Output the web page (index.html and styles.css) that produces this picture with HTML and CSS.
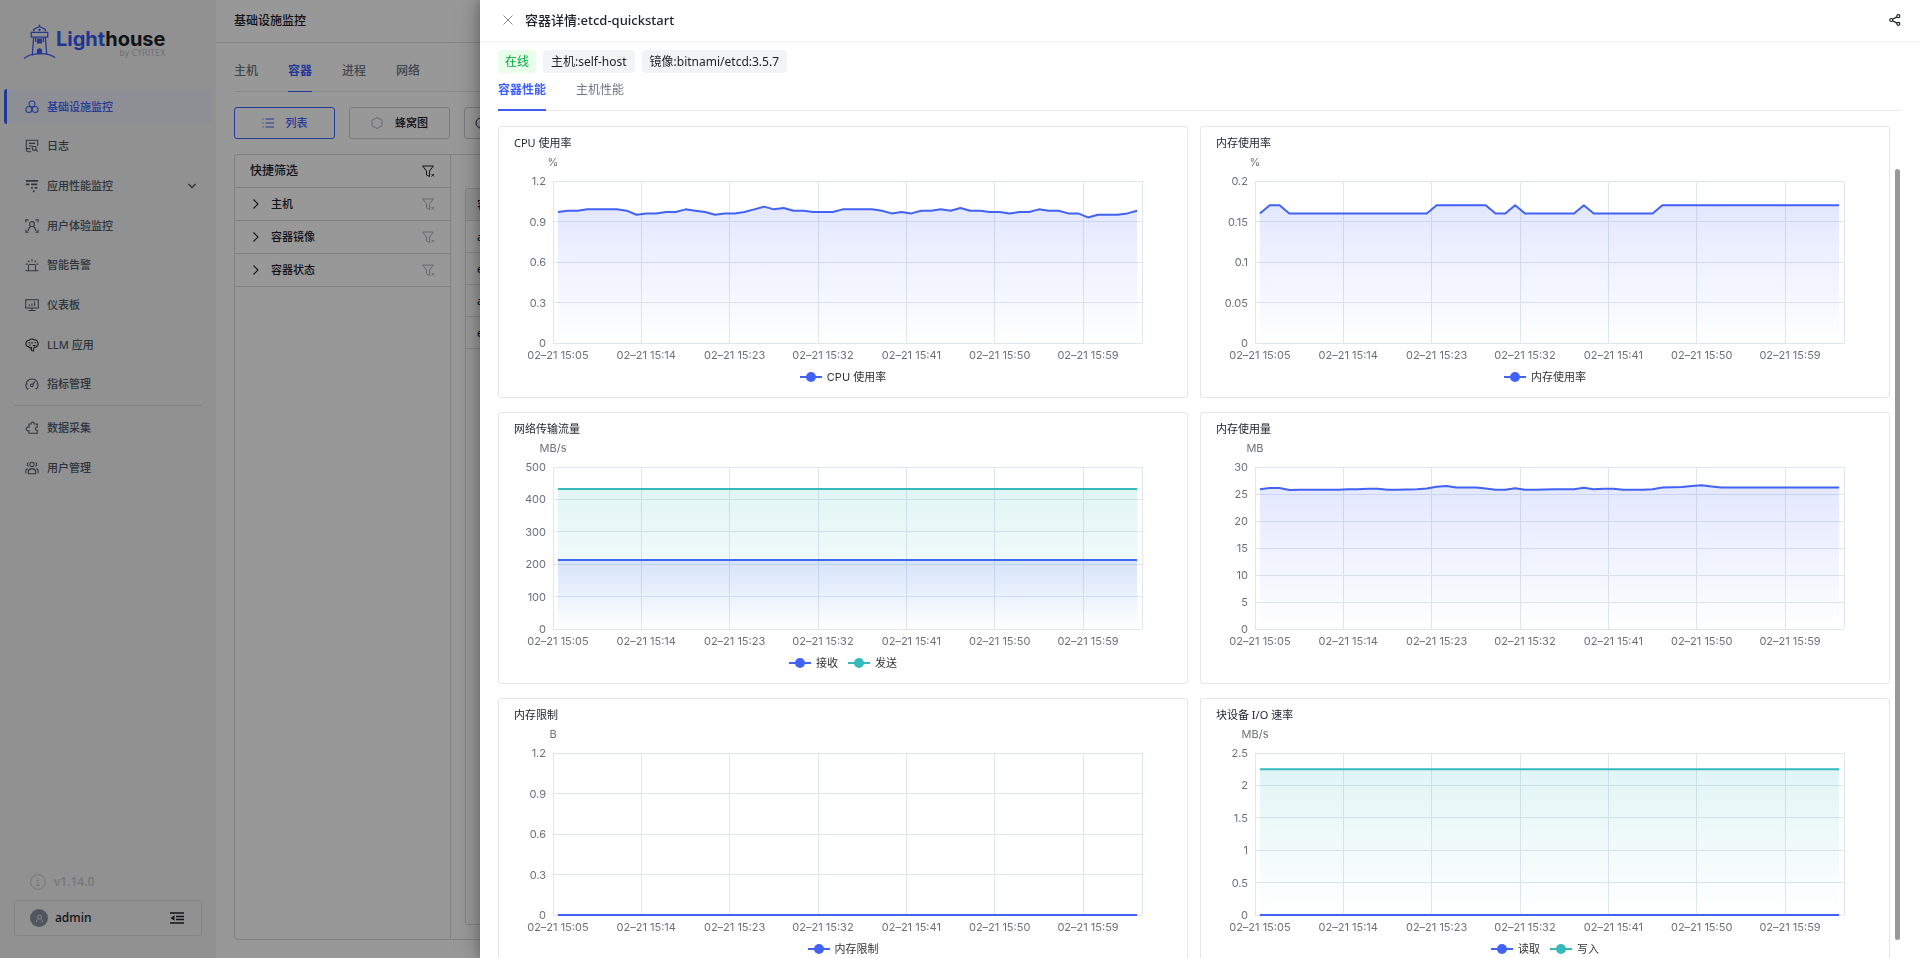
FILE: index.html
```html
<!DOCTYPE html>
<html lang="zh-CN">
<head>
<meta charset="utf-8">
<title>基础设施监控</title>
<link rel="stylesheet" href="styles.css">
</head>
<body>
<div class="app">
  <aside class="sidebar">
    <a class="logo" href="#">
      <svg class="logo-mark" viewBox="0 0 34 38" fill="none" stroke="currentColor" stroke-width="1.3">
        <path d="M17 1v3M11 8V6l6-3 6 3v2M8.500 9h17v5h-17z"/>
        <path d="M11 14L9.500 33M23 14l1.500 18M13 14v5M21 14v5"/>
        <circle cx="17" cy="6.500" r=".6"/>
        <path d="M15 16h4v4h-4zM15 31v-3a2 2 0 0 1 4 0v3z" fill="currentColor"/>
        <path d="M1 36c7-6 24-7 32-1"/>
      </svg>
      <span class="logo-words">
        <span class="logo-name"><span class="logo-light">Light</span>house</span>
        <span class="logo-by">by CYRITEX</span>
      </span>
    </a>
    <nav class="nav">
      <ul class="nav-list nav-primary">
        <li><a class="nav-item active" href="#"><svg class="nav-icon" viewBox="0 0 16 16"><circle cx="8" cy="4.600" r="3.400"/><circle cx="4.400" cy="10.800" r="3.400"/><circle cx="11.600" cy="10.800" r="3.400"/></svg>基础设施监控</a></li>
        <li><a class="nav-item" href="#"><svg class="nav-icon" viewBox="0 0 16 16"><path d="M7 14.500H3.500a2 2 0 0 1-2-2v-11h13V8M4.500 5h7M4.500 8h4M1.500 11H6"/><circle cx="10.500" cy="10.500" r="2.300"/><path d="M12.200 12.200l2.300 2.300"/></svg>日志</a></li>
        <li><a class="nav-item" href="#"><svg class="nav-icon heavy" viewBox="0 0 16 16"><path d="M1 2h14M1 6h4M7 6h7M7 10h2M11 10h3M9 14h2"/></svg>应用性能监控<svg class="nav-arrow" viewBox="0 0 10 10"><path d="M1.500 3l3.500 3.500L8.500 3"/></svg></a></li>
        <li><a class="nav-item" href="#"><svg class="nav-icon" viewBox="0 0 16 16"><path d="M1 4V1h3M12 1h3v3M1 12v3h3M12 15h3v-3"/><circle cx="8" cy="5.800" r="2.800"/><path d="M3.500 13.500c.3-2.500 1.500-4.300 3-5.200M12.500 13.500c-.3-2.500-1.500-4.300-3-5.200"/></svg>用户体验监控</a></li>
        <li><a class="nav-item" href="#"><svg class="nav-icon" viewBox="0 0 16 16"><path d="M.5 14.500h15M4 14V9a1.500 1.500 0 0 1 1.500-1.500h5A1.500 1.500 0 0 1 12 9v5M8 1v3M3.500 3l1.500 2M12.500 3L11 5M.8 7H3M13 7h2.200"/></svg>智能告警</a></li>
        <li><a class="nav-item" href="#"><svg class="nav-icon" viewBox="0 0 16 16"><path d="M.8 2h14.400v9.500H.8zM5 7.500v2M8 6v3.500M11 4v5.500M8 11.500V14M4 14.300h8"/></svg>仪表板</a></li>
        <li><a class="nav-item" href="#"><svg class="nav-icon ink" viewBox="0 0 16 16"><path d="M5 2.500C6.500.8 9 .8 10.500 2.200c2-.6 3.500.6 3.500 2.200 1.500 1 1.500 3.200 0 4.200 0 1.600-2 2.400-3.500 1.800L9.500 15 7 14l.5-3C6 11.500 4.500 11 4 9.800 2 10 .6 8 1.200 6.200.8 4.200 3 2.200 5 2.500zM4 5.500h2M8 4.500v2M11 5.500h1.500M5 8h1.500M9 8.500h3"/></svg>LLM 应用</a></li>
        <li><a class="nav-item" href="#"><svg class="nav-icon" viewBox="0 0 16 16"><path d="M3 14a7 7 0 1 1 10 0M1.500 8H3M3.500 3.500l1 1M8 1.500V3M13 8h1.500M3 14l1-1M13 14l-1-1M8.800 8.200L11.500 5"/><circle cx="7.800" cy="9.500" r="1.600"/></svg>指标管理</a></li>
      </ul>
      <ul class="nav-list nav-secondary">
        <li><a class="nav-item" href="#"><svg class="nav-icon" viewBox="0 0 16 16"><path d="M4.500 3.500H7a1.800 1.800 0 1 1 3.500 0h3.500V7a1.800 1.800 0 1 0 0 3.500v3.500H4.500v-3a2.200 2.200 0 1 1 0-4z"/></svg>数据采集</a></li>
        <li><a class="nav-item" href="#"><svg class="nav-icon" viewBox="0 0 16 16"><circle cx="8" cy="4" r="2.500"/><path d="M4 1.800a2.400 2.400 0 0 0 0 4.400M12 1.800a2.400 2.400 0 0 1 0 4.400M3.800 14.500v-2A3.500 3.500 0 0 1 7 9h2a3.500 3.500 0 0 1 3.200 3.500v2zM1 14v-2.500C1 10 2 9 3 9M15 14v-2.500C15 10 14 9 13 9"/></svg>用户管理</a></li>
      </ul>
    </nav>
    <div class="sidebar-foot">
      <div class="version"><svg class="info-icon" viewBox="0 0 16 16"><circle cx="8" cy="8" r="7.400"/><path d="M6.500 6.500H8v5M6 11.500h4M8 3.800v1.200"/></svg>v1.14.0</div>
      <div class="account">
        <span class="avatar"><svg viewBox="0 0 10 10"><circle cx="5" cy="3.500" r="2.200"/><path d="M1.500 9c.2-2 1.200-3.200 2.200-3.600M8.500 9c-.2-2-1.200-3.200-2.200-3.600"/></svg></span>
        <span class="account-name">admin</span>
        <button class="icon-button" aria-label="收起菜单"><svg class="collapse-icon" viewBox="0 0 14 12"><path d="M0 1h14M6 4.500h8M6 7.500h8M0 11h14"/><path class="solid" d="M4.500 3.200v5.600L.5 6z"/></svg></button>
      </div>
    </div>
  </aside>

  <main class="main">
    <header class="main-head"><h1>基础设施监控</h1></header>
    <div class="main-body">
      <nav class="tabs">
        <a class="tab" href="#">主机</a><a class="tab active" href="#">容器</a><a class="tab" href="#">进程</a><a class="tab" href="#">网络</a>
      </nav>
      <div class="views">
        <button class="view active"><svg class="view-icon" viewBox="0 0 12 12"><path d="M3.500 2H12M3.500 6H12M3.500 10H12M.5 2h1M.5 6h1M.5 10h1"/></svg>列表</button>
        <button class="view"><svg class="view-icon pale" viewBox="0 0 12 12"><path d="M6 .5l5 2.800v5.400l-5 2.800-5-2.800V3.300z"/></svg>蜂窝图</button>
        <button class="view view-last" aria-label="拓扑"><svg class="view-icon" viewBox="0 0 12 12"><circle cx="6" cy="6" r="5"/></svg></button>
      </div>
      <div class="panel">
        <section class="filters">
          <div class="filter-head"><h2>快捷筛选</h2><button class="icon-button" aria-label="清除全部"><svg class="funnel" viewBox="0 0 13 13"><path d="M.6 1h10.800L7.500 6v5.500L4.500 10V6zM9.500 9l2.500 2.500M12 9l-2.500 2.500"/></svg></button></div>
          <div class="filter-row"><svg class="chevron" viewBox="0 0 6 10"><path d="M.5.5L5 5 .5 9.500"/></svg><span>主机</span><button class="icon-button" aria-label="清除主机"><svg class="funnel pale" viewBox="0 0 13 13"><path d="M.6 1h10.800L7.500 6v5.500L4.500 10V6zM9.500 9l2.500 2.500M12 9l-2.500 2.500"/></svg></button></div>
          <div class="filter-row"><svg class="chevron" viewBox="0 0 6 10"><path d="M.5.5L5 5 .5 9.500"/></svg><span>容器镜像</span><button class="icon-button" aria-label="清除容器镜像"><svg class="funnel pale" viewBox="0 0 13 13"><path d="M.6 1h10.800L7.500 6v5.500L4.500 10V6zM9.500 9l2.500 2.500M12 9l-2.500 2.500"/></svg></button></div>
          <div class="filter-row"><svg class="chevron" viewBox="0 0 6 10"><path d="M.5.5L5 5 .5 9.500"/></svg><span>容器状态</span><button class="icon-button" aria-label="清除容器状态"><svg class="funnel pale" viewBox="0 0 13 13"><path d="M.6 1h10.800L7.500 6v5.500L4.500 10V6zM9.500 9l2.500 2.500M12 9l-2.500 2.500"/></svg></button></div>
        </section>
        <section class="listing">
          <div class="table-box">
            <table class="table">
              <thead><tr><th>容</th></tr></thead>
              <tbody><tr><td>a</td></tr><tr><td>e</td></tr><tr><td>a</td></tr><tr><td>e</td></tr></tbody>
            </table>
          </div>
        </section>
      </div>
    </div>
  </main>
</div>

<div class="mask"></div>
<section class="drawer" role="dialog" aria-labelledby="drawer-title">
  <header class="drawer-head">
    <button class="icon-button" aria-label="关闭"><svg class="close-icon" viewBox="0 0 10 10"><path d="M.5.5l9 9M9.500.5l-9 9"/></svg></button>
    <h2 id="drawer-title">容器详情:etcd-quickstart</h2>
    <button class="icon-button share" aria-label="分享"><svg class="share-icon" viewBox="0 0 12 12"><circle cx="2.200" cy="6" r="1.500"/><circle cx="9.300" cy="2.200" r="1.500"/><circle cx="9.300" cy="9.800" r="1.500"/><path d="M3.600 5.200l4.300-2.300M3.600 6.800l4.300 2.300"/></svg></button>
  </header>
  <div class="drawer-body">
    <div class="tags"><span class="tag online">在线</span><span class="tag">主机:self-host</span><span class="tag">镜像:bitnami/etcd:3.5.7</span></div>
    <nav class="drawer-tabs"><a class="drawer-tab active" href="#">容器性能</a><a class="drawer-tab" href="#">主机性能</a></nav>
    <div class="charts" id="charts"></div>
  </div>
  <div class="scroll-thumb"></div>
</section>
<script src="charts.js"></script>
</body>
</html>
```

FILE: styles.css
```css
* { box-sizing: border-box; }
body {
  margin: 0;
  font-family: "Noto Sans", "Noto Sans CJK SC", sans-serif;
  font-size: 12px;
  line-height: 16px;
  color: #1d2129;
  overflow: hidden;
}
h1, h2, h3, ul { margin: 0; padding: 0; font-size: 12px; font-weight: 500; list-style: none; }
a { color: inherit; text-decoration: none; }
button { font: inherit; color: inherit; }
svg { display: block; flex: none; fill: none; stroke: currentColor; }
.icon-button { display: flex; padding: 0; border: 0; background: none; }

.app { display: flex; height: 100vh; }

/* sidebar */
.sidebar { display: flex; flex-direction: column; width: 216px; flex: none; padding-bottom: 22px; background: #f2f2f2; }
.logo { display: flex; padding: 23px 0 0 23px; margin-bottom: 28px; color: #3d5efa; }
.logo-mark { width: 33px; height: 38px; }
.logo-words { display: flex; flex-direction: column; padding-top: 6px; }
.logo-name { font: 700 20px/20px Inter, sans-serif; color: #1d2129; }
.logo-light { color: #3559f0; }
.logo-by { font: 8px/8px "DejaVu Sans", sans-serif; color: #bcbcc0; text-align: right; margin-top: 1px; }
.nav-list { display: flex; flex-direction: column; padding: 0 4px; }
.nav-primary { min-height: 313px; justify-content: space-between; }
.nav-secondary { gap: 5px; margin-top: 3px; padding-top: 5px; position: relative; }
.nav-secondary::before { content: ""; position: absolute; top: 0; left: 14px; right: 14px; border-top: 1px solid #d6d6d8; }
.nav-item { display: flex; align-items: center; gap: 8px; height: 35px; padding: 0 20px 0 18px; border-left: 3px solid transparent; font-size: 11px; font-weight: 500; color: #4e5969; }
.nav-item.active { color: #3d5efa; background: #edeff8; border-left-color: #3d5efa; border-radius: 3px 0 0 3px; }
.nav-icon { width: 14px; height: 14px; stroke-width: 1.2; }
.nav-icon.heavy { stroke-width: 2; }
.nav-icon.ink { color: #1d2129; }
.nav-arrow { width: 10px; height: 10px; margin-left: auto; stroke-width: 1.5; margin-right: -5px; }
.sidebar-foot { margin-top: auto; padding: 0 14px; }
.version { display: flex; align-items: center; gap: 8px; padding-left: 16px; margin-bottom: 10px; font-weight: 500; color: #c4c4c6; }
.info-icon { width: 16px; height: 16px; }
.account { display: flex; align-items: center; gap: 7px; height: 36px; padding: 0 17px 0 15px; border: 1px solid #dcdcde; border-radius: 3px; }
.avatar { display: flex; align-items: center; justify-content: center; width: 18px; height: 18px; border-radius: 50%; background: #86909c; color: #e5e6eb; }
.avatar svg { width: 9px; height: 9px; }
.account-name { margin-right: auto; font-weight: 500; }
.collapse-icon { width: 14px; height: 12px; stroke-width: 1.7; }
.solid { fill: currentColor; stroke: none; }

/* main page */
.main { display: flex; flex-direction: column; flex: 1; min-width: 0; background: #fdfdfd; }
.main-head { padding: 13px 18px; border-bottom: 1px solid #dcdde1; }
.main-body { display: flex; flex-direction: column; flex: 1; padding: 0 18px 18px; min-height: 0; }
.tabs { display: flex; gap: 30px; border-bottom: 1px solid #e5e6eb; }
.tab { padding: 20px 0 12px; margin-bottom: -1px; border-bottom: 1px solid transparent; font-weight: 500; color: #6b7785; }
.tab.active { color: #3d5efa; font-weight: 700; border-color: #3d5efa; }
.views { display: flex; gap: 14px; margin: 15px 0; }
.view { display: flex; align-items: center; justify-content: center; gap: 12px; width: 101px; height: 32px; border: 1px solid #c9cdd4; border-radius: 3px; background: none; font-size: 11px; font-weight: 500; }
.view.active { color: #3d5efa; border-color: #3d5efa; }
.view-last { justify-content: flex-start; padding: 0 10px; }
.view-icon { width: 12px; height: 12px; }
.pale { color: #a9aeb8; }
.panel { display: flex; flex: 1; border: 1px solid #d6d8de; border-radius: 3px; min-height: 0; }
.filters { width: 216px; flex: none; border-right: 1px solid #d6d8de; }
.filter-head, .filter-row { display: flex; align-items: center; padding: 8px 15px; border-bottom: 1px solid #d6d8de; }
.filter-head { justify-content: space-between; }
.filter-row { gap: 12px; padding-left: 18px; font-size: 11px; font-weight: 500; }
.filter-row .icon-button { margin-left: auto; }
.chevron { width: 6px; height: 10px; stroke-width: 1.1; }
.funnel { width: 13px; height: 13px; }
.listing { flex: 1; padding: 33px 14px 14px; min-width: 0; }
.table-box { height: 100%; border: 1px solid #d6d8de; border-radius: 3px; overflow: hidden; }
.table { width: 100%; border-collapse: collapse; font-size: 11px; }
.table th, .table td { padding: 8px 11px 7px; text-align: left; font-weight: 500; border-bottom: 1px solid #dcdde1; }
.table th { background: #f2f3f5; }

/* drawer */
.mask { position: fixed; inset: 0; background: rgba(0, 0, 0, .4); }
.drawer { position: fixed; top: 0; right: 0; bottom: 0; width: 75%; display: flex; flex-direction: column; background: #fff; overflow: hidden; box-shadow: -6px 0 16px rgba(0, 0, 0, .12), -3px 0 6px rgba(0, 0, 0, .12), -9px 0 28px rgba(0, 0, 0, .08); }
.drawer-head { display: flex; align-items: center; gap: 12px; flex: none; padding: 12px 19px 13px 23px; border-bottom: 1px solid #f0f0f2; }
.drawer-head h2 { font-size: 13px; }
.close-icon { width: 10px; height: 10px; color: #86888c; }
.share { margin-left: auto; }
.share-icon { width: 12px; height: 12px; stroke-width: 1.2; }
.drawer-body { flex: 1; min-height: 0; padding: 8px 18px 0; overflow: hidden; }
.tags { display: flex; gap: 7px; }
.tag { padding: 4px 8px 3px; border-radius: 4px; background: #f2f3f5; }
.tag.online { padding: 4px 7px 3px; background: #e8ffea; color: #00a63e; }
.drawer-tabs { display: flex; gap: 30px; margin-bottom: 15px; border-bottom: 1px solid #e8e9ed; }
.drawer-tab { padding: 9px 0 11px; margin-bottom: -1px; border-bottom: 2px solid transparent; color: #6b7785; }
.drawer-tab.active { font-weight: 700; color: #3d5efa; border-color: #3d5efa; }
.scroll-thumb { position: absolute; top: 169px; bottom: 18px; right: 20px; width: 5px; border-radius: 3px; background: #999; }

/* charts */
.charts { display: grid; grid-template-columns: 1fr 1fr; gap: 14px 12px; margin-right: 12px; }
.chart { padding: 8px 45px 13px 0; border: 1px solid #e5e6eb; border-radius: 3px; }
.chart-title { padding-left: 15px; font-size: 11px; font-weight: 400; }
.chart-unit, .chart-plot, .chart-x, .legend { font-family: Inter, "Noto Sans CJK SC", sans-serif; font-size: 11px; line-height: 14px; color: #6e7079; }
.chart-unit { width: 108px; margin: 4px 0 12px; text-align: center; }
.chart-plot { display: flex; gap: 7px; height: 162px; }
.chart-y { display: flex; flex-direction: column; justify-content: space-between; width: 47px; text-align: right; line-height: 0; }
.chart-y span { display: block; height: 0; }
.chart-canvas { flex: 1; min-width: 0; height: 162px; overflow: visible; }
.grid-line { stroke: #e0e6f1; stroke-width: 1; shape-rendering: crispEdges; vector-effect: non-scaling-stroke; }
.series-line { stroke-width: 2; stroke-linejoin: round; vector-effect: non-scaling-stroke; }
.series-area { stroke: none; }
.chart-x { display: grid; grid-template-columns: repeat(60, minmax(0, 1fr)); margin: 5px 0 8px 54px; }
.chart-x span { justify-self: center; white-space: nowrap; grid-row: 1; }
.legend { display: flex; justify-content: center; gap: 10px; margin-right: -45px; color: #333; }
.legend-item { display: flex; align-items: center; gap: 5px; }
.legend-mark { width: 22px; height: 10px; stroke-width: 2; }
```

FILE: charts.js
```js
const BLUE = '#4162f5';
const TEAL = '#35b9bb';
const POINTS = 60;
const TIMES = ['15:05', '15:14', '15:23', '15:32', '15:41', '15:50', '15:59'];

// [value, repeat] pairs expanded to one value per minute
const runs = pairs => pairs.flatMap(([v, n]) => Array(n).fill(v));
const flat = v => Array(POINTS).fill(v);

const cpu = [.97, .98, .98, .99, .99, .99, .99, .98, .95, .96, .96, .97, .97, .99, .98, .97, .95, .96, .96, .97,
  .99, 1.01, .99, 1, .98, .98, .97, .97, .97, .99, .99, .99, .99, .98, .96, .97, .96, .98, .98, .99,
  .98, 1, .98, .98, .97, .97, .96, .97, .97, .99, .98, .98, .96, .96, .93, .95, .95, .95, .96, .98];
const memRate = runs([[.16, 1], [.17, 2], [.16, 15], [.17, 6], [.16, 2], [.17, 1], [.16, 6], [.17, 1], [.16, 7], [.17, 19]]);
const memUsed = [25.9, 26.1, 26.1, 25.75, 25.8, 25.8, 25.8, 25.8, 25.8, 25.88, 25.88, 25.95, 25.95, 25.8, 25.8, 25.85, 25.9, 26,
  26.35, 26.5, 26.2, 26.2, 26.2, 26, 25.8, 25.8, 26.05, 25.8, 25.8, 25.85, 25.9, 25.9, 25.9, 26.15, 25.9, 25.95, 25.95,
  25.8, 25.8, 25.8, 25.9, 26.2, 26.25, 26.3, 26.5, 26.6, 26.4, ...Array(13).fill(26.2)];

const charts = [
  { title: 'CPU 使用率', unit: '%', ticks: ['1.2', '0.9', '0.6', '0.3', '0'], legend: true, series: [['CPU 使用率', BLUE, cpu]] },
  { title: '内存使用率', unit: '%', ticks: ['0.2', '0.15', '0.1', '0.05', '0'], legend: true, series: [['内存使用率', BLUE, memRate]] },
  { title: '网络传输流量', unit: 'MB/s', ticks: ['500', '400', '300', '200', '100', '0'], legend: true, series: [['接收', BLUE, flat(213)], ['发送', TEAL, flat(432)]] },
  { title: '内存使用量', unit: 'MB', ticks: ['30', '25', '20', '15', '10', '5', '0'], legend: false, series: [['内存使用量', BLUE, memUsed]] },
  { title: '内存限制', unit: 'B', ticks: ['1.2', '0.9', '0.6', '0.3', '0'], legend: true, series: [['内存限制', BLUE, flat(0)]] },
  { title: '块设备 I/O 速率', unit: 'MB/s', ticks: ['2.5', '2', '1.5', '1', '0.5', '0'], legend: true, series: [['读取', BLUE, flat(0)], ['写入', TEAL, flat(2.25)]] }
];

function plot(chart, index) {
  const max = Number(chart.ticks[0]);
  const steps = chart.ticks.length - 1;
  let grid = '';
  for (let i = 0; i <= steps; i++) {
    const y = 100 * i / steps;
    grid += `<path class="grid-line" d="M0 ${y}H60"/>`;
  }
  for (const x of [0, 9, 18, 27, 36, 45, 54, 60]) grid += `<path class="grid-line" d="M${x} 0V100"/>`;
  let defs = '';
  let body = '';
  chart.series.forEach(([, color, values], s) => {
    const id = `fill-${index}-${s}`;
    const d = values.map((v, i) => `${i ? 'L' : 'M'}${i + .5} ${(100 - 100 * v / max).toFixed(2)}`).join('');
    defs += `<linearGradient id="${id}" x1="0" y1="0" x2="0" y2="1"><stop offset="0" stop-color="${color}" stop-opacity=".15"/><stop offset="1" stop-color="${color}" stop-opacity="0"/></linearGradient>`;
    if (values.some(v => v > 0)) body += `<path class="series-area" fill="url(#${id})" d="${d}V100H.5Z"/>`;
    body += `<path class="series-line" stroke="${color}" d="${d}"/>`;
  });
  return `<svg class="chart-canvas" viewBox="0 0 60 100" preserveAspectRatio="none"><defs>${defs}</defs>${grid}${body}</svg>`;
}

function legend(chart) {
  if (!chart.legend) return '';
  const items = chart.series.map(([name, color]) =>
    `<span class="legend-item"><svg class="legend-mark" viewBox="0 0 22 10"><path stroke="${color}" d="M0 5h22"/><circle cx="11" cy="5" r="5" fill="${color}" stroke="none"/></svg>${name}</span>`);
  return `<div class="legend">${items.join('')}</div>`;
}

document.getElementById('charts').innerHTML = charts.map((chart, index) => `
  <article class="chart">
    <h3 class="chart-title">${chart.title}</h3>
    <div class="chart-unit">${chart.unit}</div>
    <div class="chart-plot">
      <div class="chart-y">${chart.ticks.map(t => `<span>${t}</span>`).join('')}</div>
      ${plot(chart, index)}
    </div>
    <div class="chart-x">${TIMES.map((t, i) => `<span style="grid-column:${i * 9 + 1}">02–21 ${t}</span>`).join('')}</div>
    ${legend(chart)}
  </article>`).join('');
```
